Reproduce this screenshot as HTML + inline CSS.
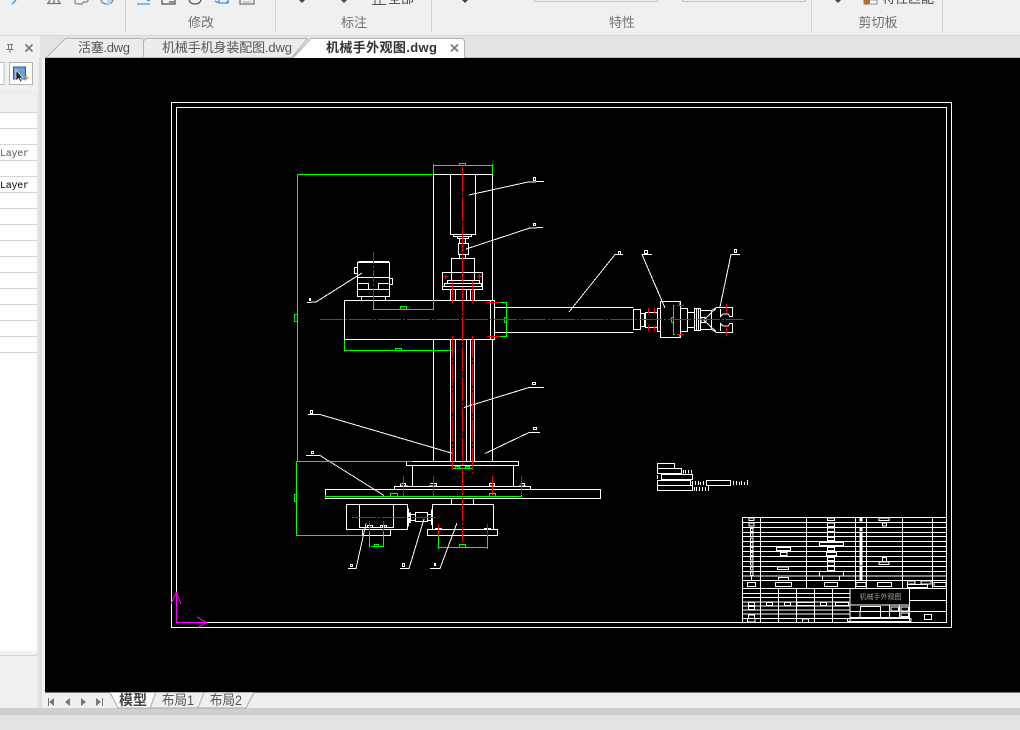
<!DOCTYPE html>
<html lang="zh"><head><meta charset="utf-8"><style>
html,body{margin:0;padding:0;width:1020px;height:730px;overflow:hidden;background:#f0f0f0}
svg{position:absolute;left:0;top:0}
text{font-family:"Liberation Sans","Noto Sans CJK SC",sans-serif}
</style></head><body>
<svg width="1020" height="730" viewBox="0 0 1020 730" xmlns="http://www.w3.org/2000/svg">
<!-- ribbon -->
<rect width="1020" height="36" fill="#f0f0f0"/>
<rect y="35" width="1020" height="1" fill="#d6d6d6"/>
<g fill="#d0d0d0"><rect x="125" width="1" height="32"/><rect x="275" width="1" height="32"/><rect x="431" width="1" height="32"/><rect x="811" width="1" height="32"/><rect x="942" width="1" height="32"/></g>
<g font-size="13" fill="#707070" text-anchor="middle"><text x="201" y="27">修改</text><text x="354" y="27">标注</text><text x="622" y="27">特性</text><text x="878" y="27">剪切板</text></g>
<!-- cut off ribbon icons -->
<g fill="none" stroke-width="1.3">
<path d="M12 4L16 0" stroke="#3f92d8"/>
<path d="M47 3.5H61M50 0L48 3.5M58 0L60 3.5M54 0V3.5" stroke="#777"/>
<path d="M75 0V2Q75 4 78 4H81Q83 4 83 2M83 2H86Q88 2 88 0" stroke="#888"/>
<path d="M101 0Q102 4 107 4Q112 4 113 0" stroke="#6a8aa8"/><path d="M107 0V4H110L112 0Z" fill="#bcd6ec" stroke="none"/>
<path d="M137 4H150M147 1L150 0" stroke="#4d8fcc"/>
<path d="M162 0V4H175V0M169 2H174" stroke="#555"/>
<path d="M189 0Q190 4 195 4Q200 4 201 0" stroke="#555"/>
<path d="M215 1L219 3M219 0V3H228V0M226 3L229 1" stroke="#4d8fcc"/>
<path d="M240 0V4H254V0" stroke="#777"/><path d="M243 2H251" stroke="#bbb"/>
</g>
<g fill="#444"><path d="M299 0H305L302 3Z"/><path d="M341 0H347L344 3Z"/><path d="M462 0H468L465 3Z"/><path d="M835 0H841L838 3Z"/></g>
<g fill="none" stroke="#555"><path d="M372 4.5H386M375 0V4.5M380 0V4.5"/></g>
<text x="388" y="3" font-size="13" fill="#444">全部</text>
<path d="M534.5 0V1.5H657.5V0M682.5 0V1.5H805.5V0" fill="none" stroke="#c4c4c4"/>
<path d="M864 0H877V4H864Z" fill="#fff" stroke="#888"/><path d="M864 0H870V3L866 5L864 3Z" fill="#b8682a"/>
<text x="882" y="3" font-size="13" fill="#444">特性匹配</text>
<!-- tabs strip -->
<rect y="36" width="1020" height="22" fill="#e3e3e3"/>
<rect x="0" y="36" width="45" height="22" fill="#f0f0f0"/>
<rect x="40" y="36" width="5" height="22" fill="#e3e3e3"/>
<path d="M46.5 57.5L65.5 38.5H142.5L143.5 41V57.5" fill="#ececec" stroke="#b4b4b4"/>
<path d="M143.5 57.5V41L146 38.5H307.5L292 57.5" fill="#ececec" stroke="#b4b4b4"/>
<path d="M293 58L311 38.5H462.5L464.5 41V58Z" fill="#fff" stroke="#b4b4b4"/>
<rect y="57" x="45" width="975" height="1" fill="#bdbdbd"/>
<rect y="57" x="294" width="170" height="1" fill="#fff"/>
<text x="78" y="52" font-size="13" fill="#555" textLength="52" lengthAdjust="spacing">活塞.dwg</text>
<text x="162" y="52" font-size="13" fill="#555" textLength="130" lengthAdjust="spacing">机械手机身装配图.dwg</text>
<text x="326" y="52" font-size="13" font-weight="700" fill="#333" textLength="111" lengthAdjust="spacing">机械手外观图.dwg</text>
<path d="M451 44.5L458 51.5M458 44.5L451 51.5" stroke="#777" stroke-width="1.6"/>
<!-- left panel -->
<rect x="0" y="58" width="38" height="650" fill="#f0f0f0"/>
<path d="M7 44.5H13M8.5 44.5V49.5H11.5V44.5M6.5 49.5H13.5M10 49.5V53" fill="none" stroke="#777"/>
<path d="M25.5 44.5L32.5 51.5M32.5 44.5L25.5 51.5" stroke="#777" stroke-width="1.6"/>
<rect x="-3" y="62.5" width="7" height="22" fill="#fff" stroke="#bdbdbd"/>
<rect x="9.5" y="62.5" width="23" height="22" fill="#fff" stroke="#b4b4b4"/>
<rect x="13.5" y="67" width="12" height="12" fill="#6f9fd8" stroke="#1f5fa8"/>
<path d="M16 70V81L18.5 78.5L20.5 82L22 81L20 78H23Z" fill="#222" stroke="#fff" stroke-width=".6"/>
<path d="M27 74L24 78H26L24 82L29 77H26.5Z" fill="#f29a12"/>
<rect x="0" y="93" width="38" height="560" fill="#fff"/>
<rect x="0" y="93" width="38" height="19" fill="#f0f0f0"/>
<rect x="38" y="58" width="7" height="650" fill="#f0f0f0"/>
<rect x="38" y="58" width="1" height="650" fill="#e8e8e8"/>
<rect x="39" y="58" width="3" height="650" fill="#dfdfdf"/>
<g fill="#d4d4d4">
<rect y="92" width="38" height="1" fill="#e8e8e8"/>
<rect y="112" width="37" height="1"/><rect y="128" width="37" height="1"/><rect y="144" width="37" height="1"/><rect y="160" width="37" height="1"/><rect y="176" width="37" height="1"/><rect y="192" width="37" height="1"/><rect y="208" width="37" height="1"/><rect y="224" width="37" height="1"/><rect y="240" width="37" height="1"/><rect y="256" width="37" height="1"/><rect y="272" width="37" height="1"/><rect y="288" width="37" height="1"/><rect y="304" width="37" height="1"/><rect y="320" width="37" height="1"/><rect y="336" width="37" height="1"/><rect y="352" width="37" height="1"/>
</g>
<text x="0" y="156" font-size="10" fill="#555" textLength="29" style="font-family:'Liberation Mono',monospace">Layer</text>
<text x="0" y="188" font-size="10" fill="#000" textLength="29" style="font-family:'Liberation Mono',monospace">Layer</text>
<rect x="0" y="651" width="37" height="56" fill="#f0f0f0"/><rect x="0" y="655" width="37" height="1" fill="#d4d4d4"/>
<rect x="37" y="93" width="1" height="615" fill="#e4e4e4"/>
<!-- canvas -->
<rect x="45" y="58" width="975" height="634" fill="#000"/>
<g shape-rendering="crispEdges" fill="none" stroke-width="1">
<!-- frame -->
<rect x="171.5" y="102.5" width="780" height="525" stroke="#fff"/>
<rect x="176.5" y="107.5" width="770" height="515" stroke="#fff"/>
<!-- white geometry -->
<g stroke="#fff">
<path d="M433.5 174.5H492.5M433.5 174.5V300M492.5 174.5V300M433.5 339.5V461M492.5 339.5V461"/>
<rect x="450.5" y="174.5" width="25" height="60"/>
<path d="M453.5 234.5V236.5H471.5V234.5M457.5 236.5V238.5H468.5V236.5M459.5 238.5V243.5M465.5 238.5V243.5"/>
<rect x="458.5" y="243.5" width="10" height="11"/>
<path d="M459.5 254.5V258.5M465.5 254.5V258.5"/>
<rect x="451.5" y="258.5" width="23" height="22"/>
<rect x="442.5" y="272.5" width="40" height="17"/>
<path d="M447.5 283.5V280.5H479.5V283.5M444.5 286.5V283.5H481.5V286.5H442.5"/>
<path d="M450.5 289.5V300M455.5 289.5V300M462.5 289.5V300M466.5 289.5V300M470.5 289.5V300M474.5 289.5V300"/>
<path d="M450.5 339.5V461M455.5 339.5V461M466.5 339.5V461M470.5 339.5V461M474.5 339.5V461"/>
<rect x="344.5" y="300.5" width="150" height="39"/>
<path d="M490.5 300.5V339.5M494.5 307.5H633.5M494.5 332.5H633.5"/>
<!-- motor top -->
<rect x="357.5" y="262.5" width="32" height="34"/>
<path d="M358.5 261.5H389M357.5 267.5H354.5V273.5H357.5M389.5 278.5H392.5V284.5H389.5M357.5 277.5H389.5M357.5 289.5H389.5M358.5 283.5H368.5V289M378.5 289V283.5H388.5M361.5 296.5V300M385.5 296.5V300"/>
<!-- leaders -->
<path d="M469 195L528 182L544 181.5M466 249L530 228L543 227.5M362 273L316 302L307 302.5"/>
<path d="M464 407.5L529 387.5H544M485 453.5L529 432.5H540M453 453.5L320 414.5H308M384 495.5L320 455.5H306"/>
<path d="M366 523.5L356 568.5H348M424 519L409 568.5H400M457 523L440 568.5H430"/>
<path d="M569 312L615 254.5H623M665 308L642 254.5H652M720 307L731 254.5H740"/>
<rect x="533.5" y="177.5" width="2" height="3"/><rect x="533.5" y="223.5" width="2" height="2"/><rect x="309.5" y="298.5" width="1" height="2"/>
<rect x="532.5" y="382.5" width="3" height="2"/><rect x="533.5" y="427.5" width="3" height="2"/><rect x="310.5" y="410.5" width="2" height="3"/><rect x="311.5" y="451.5" width="2" height="2"/>
<rect x="350.5" y="564.5" width="2" height="2"/><rect x="402.5" y="563.5" width="2" height="3"/><rect x="434.5" y="563.5" width="1" height="2"/>
<rect x="618.5" y="251.5" width="2" height="3"/><rect x="644.5" y="250.5" width="3" height="3"/><rect x="734.5" y="249.5" width="2" height="3"/>
<!-- base -->
<rect x="406.5" y="461.5" width="112" height="4"/>
<path d="M412.5 465.5V486.5M513.5 465.5V486.5"/>
<rect x="394.5" y="486.5" width="136" height="3"/>
<rect x="325.5" y="489.5" width="275" height="9"/>
<path d="M451.5 498.5V504.5M473.5 498.5V504.5"/>
<rect x="432.5" y="504.5" width="61" height="25"/>
<rect x="427.5" y="529.5" width="70" height="6"/>
<rect x="346.5" y="504.5" width="61" height="25"/>
<path d="M359.5 504.5V527.5H393.5V504.5M362.5 529.5V535.5H390.5V529.5"/>
<rect x="415.5" y="512.5" width="12" height="9"/>
<path d="M410.5 514.5H415M410.5 520.5H415M427.5 514.5H431M427.5 520.5H431M408.5 508.5V526.5M409.5 512.5V523M410.5 512.5V523M431.5 509.5V525M432.5 509.5V525"/>
<!-- bolts -->
<path d="M401.5 483.5H405.5V486M400.5 486H401.5M400.5 483.5V486M400 486H408M430.5 483.5H436.5V486M429 486H437M489.5 483.5H494.5V486H489.5Z M520.5 483.5H524.5V486M519 486H526"/>
<path d="M367.5 525.5H372.5V527.5H367.5ZM380.5 525.5H382.5V527.5H380.5ZM384.5 525.5H386.5V527.5H384.5ZM435 528.5H442M484 528.5H491"/>
<!-- arm end -->
<rect x="633.5" y="309.5" width="7" height="20"/>
<rect x="640.5" y="313.5" width="4" height="13"/>
<rect x="645.5" y="312.5" width="12" height="15"/>
<rect x="657.5" y="308.5" width="3" height="23"/>
<rect x="660.5" y="301.5" width="20" height="36"/>
<rect x="680.5" y="308.5" width="7" height="23"/>
<rect x="687.5" y="312.5" width="7" height="15"/>
<rect x="694.5" y="308.5" width="6" height="22"/>
<path d="M696.5 308.5V330.5M698.5 308.5V330.5"/>
<path d="M700.5 310.5H711.5L716.5 307.5H732.5V316.5H730L728 314H723L720.5 316.5V309M700.5 329.5H711.5L716.5 332.5H732.5V323.5H730L728 326H723L720.5 323.5V331"/>
<path d="M711.5 310.5V329.5M703.5 320L716 308.5M703.5 320L716 331.5M701 317.5H706V322.5H701Z"/>
<path d="M680 302.5V305M680 335V337"/>
<!-- side part -->
<rect x="657.5" y="463.5" width="17" height="5"/><rect x="657.5" y="468.5" width="24" height="5"/><rect x="661.5" y="474.5" width="31" height="5"/><rect x="657.5" y="480.5" width="33" height="5"/><rect x="657.5" y="485.5" width="35" height="5"/><rect x="706.5" y="480.5" width="24" height="5"/>
<path d="M657.5 475V479M683.5 470V473.5M685.5 470V473.5M688.5 470V473.5M691.5 470V473.5M692.5 481V485M695.5 481V485M698.5 481V485M700.5 482V485M703.5 481V485M733.5 481V485M736.5 481V485M739.5 482V485M741.5 481V485M744.5 482V485M747.5 480V485M694.5 487V491M696.5 487V491M699.5 487V491M702.5 487V491M705.5 487V491M708.5 486V491"/>
</g>
<!-- green -->
<g stroke="#0f0">
<path d="M297.5 174.5H433.5M297.5 174.5V461M296.5 461.5H412.5M296.5 461.5V535.5H362.5M294.5 314.5H297.5M294.5 321.5H297.5M294.5 314.5V321.5M294.5 494.5H296M294.5 501.5H296M294.5 494.5V501.5"/>
<path d="M433.5 164V174.5M492.5 164V174.5M433.5 165.5H492.5M459.5 165V163.5H465.5V165"/>
<path d="M373.5 300V309.5H433.5V300M400.5 309V306.5H406.5V309"/>
<path d="M344.5 339.5V351.5M344.5 350.5H452.5V339.5M395.5 350V348.5H401.5V350"/>
<path d="M495 302.5H507.5M495 336.5H507.5M506.5 302.5V336.5M504.5 317.5H506.5M504.5 322.5H506.5M504.5 317.5V322.5"/>
<path d="M325.5 496.5H521.5M325.5 495V498M521.5 495V497M390.5 496V493.5H397.5V496M489.5 496V493.5H495.5V496"/>
<path d="M452.5 468.5H472.5M455.5 468V466.5H459.5V468M465.5 468V466.5H469.5V468"/>
<path d="M369.5 531.5V547.5M383.5 531.5V547.5M371 546.5H383.5M374.5 546V544.5H378.5V546"/>
<path d="M438.5 535.5V549M487.5 535.5V549M438.5 547.5H487.5M459.5 547V544.5H465.5V547"/>
<path d="M673.5 305V334.5H675M671.5 317.5H673.5M671.5 322.5H673.5M671.5 317.5V322.5"/>
</g>
<!-- red -->
<g stroke="#f00">
<path d="M320 319.5H743" stroke-dasharray="23 2 2 2"/>
<path d="M462.5 167V542" stroke-dasharray="24 2 2 2"/>
<path d="M452.5 281V303M472.5 281V303M452.5 336V471M472.5 336V473" stroke-dasharray="22 2 2 2"/>
<path d="M373.5 252V300" stroke-dasharray="12 2 2 2"/>
<path d="M486 302.5H499M487 336.5H500"/>
<path d="M445.5 274V279M443 276.5H448M479.5 274V279M477 276.5H482"/>
<path d="M403.5 476V496M433.5 476V496M492.5 476V496M521.5 476V494"/>
<path d="M352 517.5H439" stroke-dasharray="24 2 2 2"/>
<path d="M369.5 521V532M383.5 521V532M438.5 524V536M487.5 524V536"/>
<path d="M648.5 308V313M654.5 308V313M648.5 326V331M654.5 326V331M726.5 304V313M726.5 326V336M677 305.5H684M677 334.5H684"/>
</g>
<!-- title block (coordinates at 3x) -->
<g transform="translate(735 510) scale(.33333)" stroke="#fff" stroke-width="3">
<path d="M22 22H635M22 37H635M22 52H635M22 67H635M22 80H635M22 94H635M22 109H635M22 124H635M22 139H635M22 154H635M22 169H635M22 184H635M22 198H635M22 212H635M22 235H635"/>
<path d="M22 22V337M76 22V337M214 22V235M362 22V235M395 22V235M502 22V235M592 22V235M130 235V337M184 235V337M238 235V337M292 235V337M345 235V337M523 235V337"/>
<path d="M22 250H345M22 262H345M22 276H345M22 288H345M22 300H345M22 312H345M22 325H345M22 337H523"/>
<path d="M345 285H523M345 305H523M345 322H523M523 272H635M523 305H635M375 305V322M437 305V322M463 285V322M493 285V322"/>
<g>
<rect x="42" y="24" width="15" height="8"/><rect x="42" y="39" width="15" height="9"/><rect x="46" y="55" width="8" height="9"/><rect x="46" y="69" width="8" height="11"/><rect x="46" y="84" width="8" height="10"/><rect x="46" y="98" width="8" height="10"/><rect x="46" y="113" width="8" height="9"/><rect x="46" y="128" width="8" height="9"/><rect x="46" y="141" width="8" height="9"/><rect x="46" y="156" width="8" height="9"/><rect x="46" y="171" width="8" height="9"/><rect x="46" y="186" width="8" height="10"/><path d="M49 200V210"/><rect x="37" y="217" width="25" height="13"/>
<rect x="124" y="112" width="43" height="10"/><rect x="136" y="127" width="20" height="10"/><rect x="127" y="171" width="34" height="8"/><rect x="130" y="203" width="31" height="8"/><rect x="121" y="217" width="49" height="13"/>
<rect x="277" y="24" width="22" height="8"/><rect x="277" y="39" width="22" height="10"/><rect x="277" y="54" width="22" height="10"/><rect x="277" y="68" width="22" height="12"/><rect x="277" y="82" width="22" height="10"/><rect x="253" y="97" width="73" height="10"/><rect x="277" y="113" width="22" height="9"/><rect x="274" y="127" width="30" height="9"/><rect x="277" y="142" width="22" height="9"/><rect x="277" y="156" width="22" height="10"/><rect x="277" y="170" width="22" height="11"/><path d="M253 198V185M326 185V198"/><rect x="262" y="198" width="52" height="13"/><rect x="268" y="217" width="40" height="13"/>
<rect x="375" y="24" width="6" height="9" fill="#fff"/><rect x="375" y="54" width="6" height="9" fill="#fff"/><rect x="375" y="69" width="6" height="38" fill="#fff"/><rect x="375" y="113" width="6" height="52" fill="#fff"/><rect x="375" y="171" width="6" height="10" fill="#fff"/><rect x="375" y="186" width="6" height="10" fill="#fff"/><rect x="375" y="200" width="6" height="8" fill="#fff"/><rect x="363" y="217" width="30" height="13"/>
<rect x="432" y="24" width="30" height="8"/><rect x="442" y="39" width="13" height="9"/><rect x="442" y="142" width="13" height="12"/><rect x="432" y="156" width="30" height="8"/><rect x="427" y="217" width="43" height="13"/>
<rect x="517" y="213" width="23" height="9"/><rect x="558" y="213" width="30" height="9"/><rect x="517" y="224" width="60" height="9"/><rect x="597" y="217" width="36" height="13"/>
<rect x="40" y="277" width="19" height="9"/><rect x="40" y="289" width="19" height="10"/><rect x="94" y="277" width="19" height="9"/><rect x="148" y="277" width="19" height="9"/><rect x="186" y="277" width="52" height="9"/><rect x="256" y="277" width="19" height="9"/><rect x="301" y="277" width="40" height="9"/><rect x="40" y="315" width="19" height="10"/><rect x="37" y="326" width="23" height="10"/><rect x="202" y="327" width="19" height="10"/><rect x="338" y="325" width="190" height="10"/><rect x="377" y="290" width="60" height="15"/><rect x="468" y="291" width="22" height="12"/><rect x="498" y="291" width="22" height="12"/><rect x="498" y="309" width="22" height="10"/><rect x="568" y="313" width="22" height="16"/>
</g>
</g>
<!-- UCS -->
<g stroke="#f0f">
<path d="M176.5 592V622.5H206.5M197 617L206.5 622.5L198 627.5M171 604L176.5 592L181 604"/>
</g>
</g>
<text x="880.5" y="599" font-size="7" text-anchor="middle" fill="#a8a48c">机械手外观图</text>
<!-- bottom bar -->
<rect x="45" y="692" width="975" height="16" fill="#efefef"/>
<rect x="45" y="692" width="975" height="1" fill="#777"/>
<rect x="0" y="708" width="1020" height="7" fill="#cfcfcf"/>
<rect x="0" y="715" width="1020" height="15" fill="#e3e3e3"/>
<g fill="#777"><rect x="48" y="698" width="1" height="8"/><path d="M54 698V706L49 702Z"/><path d="M70 698V706L65 702Z"/><path d="M81 698V706L86 702Z"/><path d="M96 698V706L101 702Z"/><rect x="102" y="698" width="1" height="8"/></g>
<path d="M110 692.5H156L150 708H118Z" fill="#fff" stroke="#aaa"/>
<path d="M156 692.5L150 708H198L204 692.5M204 692.5L198 708H246L254 692.5" fill="#efefef" stroke="#aaa"/>
<text x="119" y="705" font-size="14" font-weight="700" fill="#444">模型</text>
<text x="162" y="705" font-size="14" fill="#555" textLength="32" lengthAdjust="spacingAndGlyphs">布局1</text>
<text x="210" y="705" font-size="14" fill="#555" textLength="32" lengthAdjust="spacingAndGlyphs">布局2</text>
</svg>
</body></html>
